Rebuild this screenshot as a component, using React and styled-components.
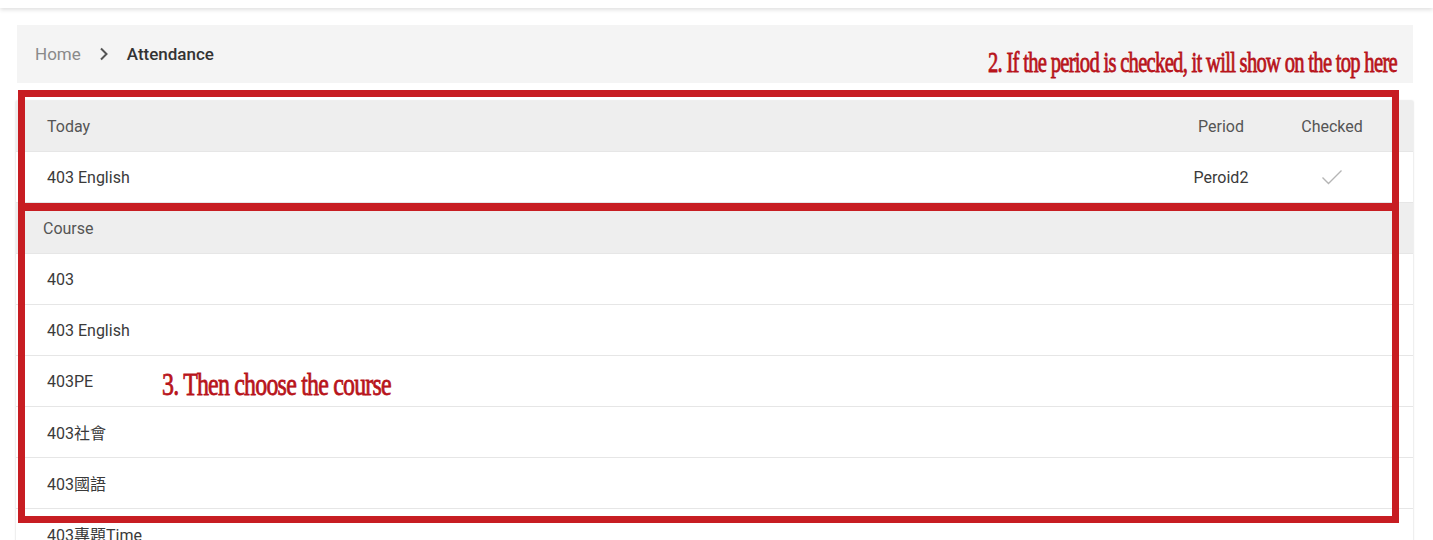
import React from 'react';
import styled, { createGlobalStyle } from 'styled-components';

const GlobalStyle = createGlobalStyle`
  body {
    margin: 0;
    background: #fff;
    font-family: Roboto, "Noto Sans CJK TC", sans-serif;
    overflow: hidden;
  }
`;

const TopBar = styled.div`
  height: 8px;
  background: #fff;
  box-shadow: 0 2px 4px rgba(0, 0, 0, 0.12);
`;

const Page = styled.div`
  position: relative;
  padding: 17px 20px 0 17px;
`;

const Breadcrumb = styled.nav`
  display: flex;
  align-items: center;
  height: 58px;
  padding: 0 18px;
  background: #f4f4f4;
  font-size: 17px;
`;

const Crumb = styled.span`
  color: ${props => (props.active ? '#333' : '#8a8a8a')};
  font-weight: ${props => (props.active ? 500 : 400)};
`;

const Sep = styled.span`
  margin: 0 18px 0 18px;
  color: #555;
  display: flex;
`;

const Card = styled.div`
  margin-top: 18px;
  margin-left: -1px;
  background: #fff;
  box-shadow: 0 0 2px rgba(0, 0, 0, 0.2);
`;

const Row = styled.div`
  display: grid;
  grid-template-columns: 1fr 110px 112px;
  align-items: center;
  height: 50px;
  padding: 0 25px 0 ${props => (props.indent ? 27 : 31)}px;
  border-bottom: 1px solid #e6e6e6;
  background: ${props => (props.head ? '#eeeeee' : '#fff')};
  color: ${props => (props.head ? '#555' : '#3a3a3a')};
  font-size: 16px;
`;

const Cell = styled.div`
  display: flex;
  justify-content: ${props => (props.center ? 'center' : 'flex-start')};
`;

const Frame = styled.div`
  position: absolute;
  left: 18px;
  width: 1381px;
  top: ${props => props.top}px;
  height: ${props => props.h}px;
  border: 7px solid #c71d22;
  box-sizing: border-box;
  pointer-events: none;
`;

const Note = styled.div`
  position: absolute;
  top: ${props => props.top}px;
  left: ${props => props.left}px;
  font-family: "Liberation Serif", serif;
  font-size: ${props => props.size}px;
  line-height: 1;
  color: #b8141b;
  white-space: nowrap;
  letter-spacing: -1px;
  transform: scaleX(${props => props.sx});
  transform-origin: left top;
  -webkit-text-stroke: 0.8px #b8141b;
`;

const Check = () => (
  <svg width="22" height="16" viewBox="0 0 22 16">
    <path d="M1.5 8.5 L7.5 14.5 L20.5 1.5" fill="none" stroke="#b5b5b5" strokeWidth="1.4" />
  </svg>
);

const courses = ['403', '403 English', '403PE', '403社會', '403國語', '403專題Time'];

export default function App() {
  return (
    <>
      <GlobalStyle />
      <TopBar />
      <Page>
        <Breadcrumb>
          <Crumb>Home</Crumb>
          <Sep>
            <svg width="10" height="14" viewBox="0 0 10 14">
              <path d="M2 1.5 L7.5 7 L2 12.5" fill="none" stroke="#555" strokeWidth="2" />
            </svg>
          </Sep>
          <Crumb active>Attendance</Crumb>
        </Breadcrumb>
        <Card>
          <Row head>
            <Cell>Today</Cell>
            <Cell center>Period</Cell>
            <Cell center>Checked</Cell>
          </Row>
          <Row>
            <Cell>403 English</Cell>
            <Cell center>Peroid2</Cell>
            <Cell center>
              <Check />
            </Cell>
          </Row>
          <Row head indent>
            <Cell>Course</Cell>
          </Row>
          {courses.map(c => (
            <Row key={c}>
              <Cell>{c}</Cell>
            </Row>
          ))}
        </Card>
        <Frame top={82} h={121} />
        <Frame top={195} h={320} />
        <Note top={40} left={988} size={29} sx={0.71}>
          2. If the period is checked, it will show on the top here
        </Note>
        <Note top={361} left={162} size={31} sx={0.77}>
          3. Then choose the course
        </Note>
      </Page>
    </>
  );
}
